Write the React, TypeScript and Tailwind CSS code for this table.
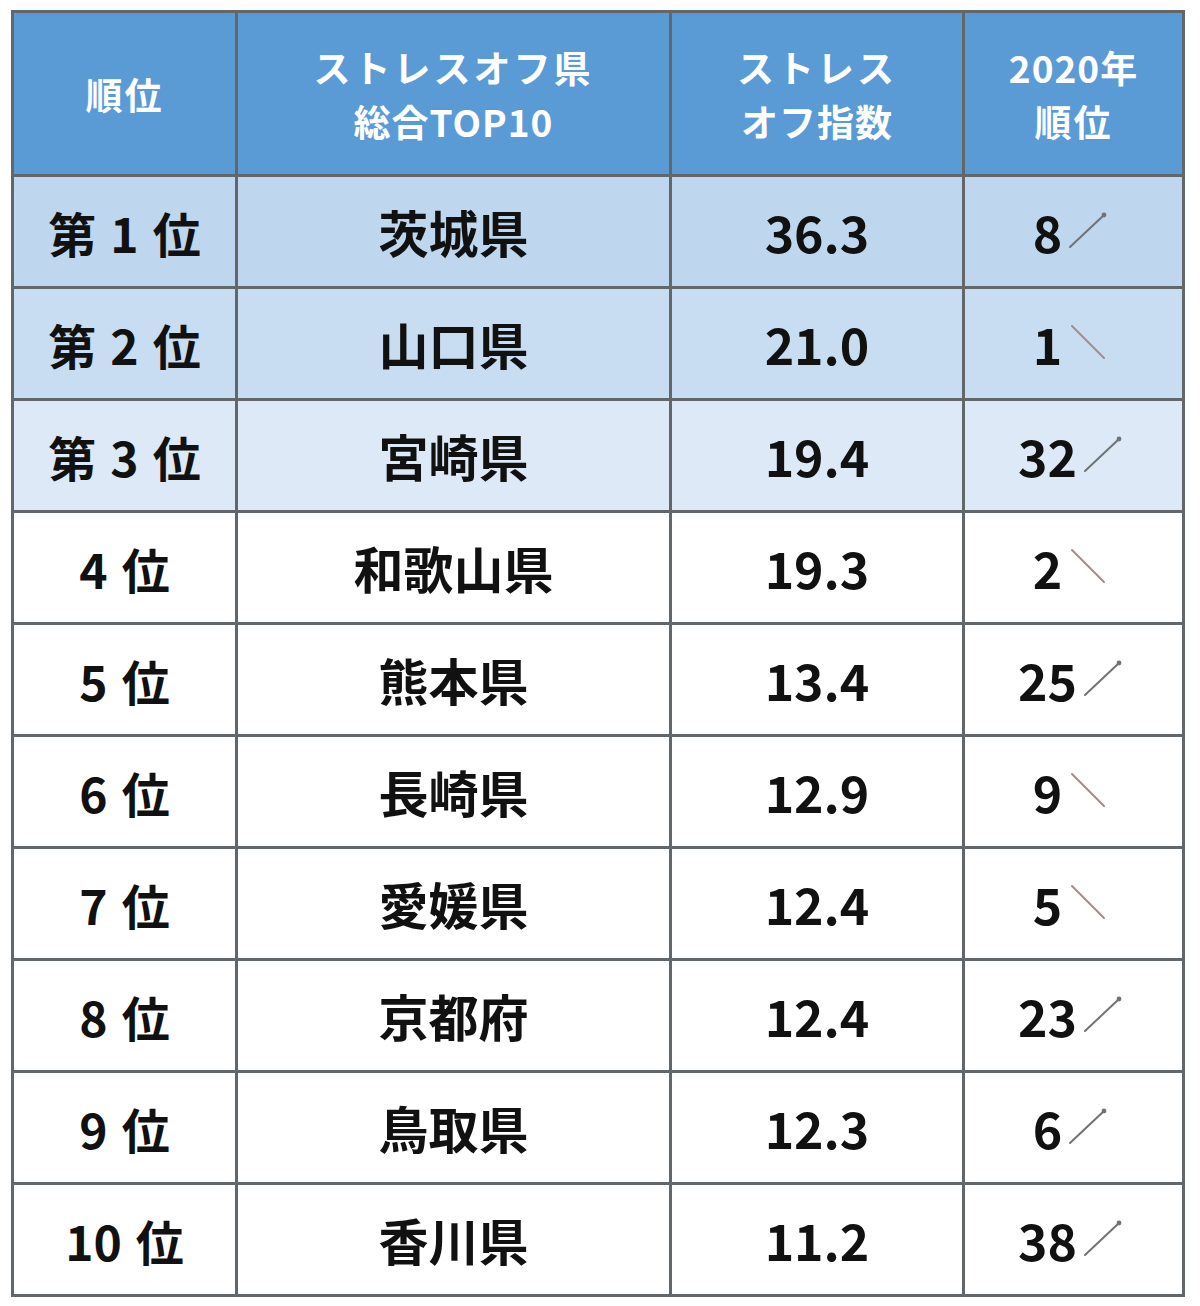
import React from "react";

type Row = { rank: string[]; pref: string; score: string; prev: string; up: boolean; bg: string };

const rows: Row[] = [
  { rank: ["第", "1", "位"], pref: "茨城県", score: "36.3", prev: "8", up: true, bg: "bg-[#bed6ee]" },
  { rank: ["第", "2", "位"], pref: "山口県", score: "21.0", prev: "1", up: false, bg: "bg-[#c8ddf1]" },
  { rank: ["第", "3", "位"], pref: "宮崎県", score: "19.4", prev: "32", up: true, bg: "bg-[#dde9f6]" },
  { rank: ["4", "位"], pref: "和歌山県", score: "19.3", prev: "2", up: false, bg: "bg-white" },
  { rank: ["5", "位"], pref: "熊本県", score: "13.4", prev: "25", up: true, bg: "bg-white" },
  { rank: ["6", "位"], pref: "長崎県", score: "12.9", prev: "9", up: false, bg: "bg-white" },
  { rank: ["7", "位"], pref: "愛媛県", score: "12.4", prev: "5", up: false, bg: "bg-white" },
  { rank: ["8", "位"], pref: "京都府", score: "12.4", prev: "23", up: true, bg: "bg-white" },
  { rank: ["9", "位"], pref: "鳥取県", score: "12.3", prev: "6", up: true, bg: "bg-white" },
  { rank: ["10", "位"], pref: "香川県", score: "11.2", prev: "38", up: true, bg: "bg-white" },
];

function Arrow({ up }: { up: boolean }) {
  if (up) {
    return (
      <svg width="44" height="44" viewBox="0 0 44 44" className="ml-[4px] mt-[-6px]">
        <line x1="4" y1="40" x2="38" y2="8" stroke="#6f7378" strokeWidth="2" strokeLinecap="round" />
        <circle cx="38" cy="8" r="2.4" fill="#6f7378" />
      </svg>
    );
  }
  return (
    <svg width="44" height="44" viewBox="0 0 44 44" className="ml-[4px] mt-[-4px]">
      <line x1="6" y1="6" x2="38" y2="38" stroke="#a88a86" strokeWidth="2" strokeLinecap="round" />
    </svg>
  );
}

const cellBase = "flex items-center justify-center";
const head = "flex items-center justify-center flex-col bg-[#5a9bd5] text-white font-bold text-[37px] leading-[54px]";

export default function App() {
  return (
    <div className="w-[1200px] h-[1306px] bg-white pl-[11px] pt-[10px]" style={{ fontFamily: '"Noto Sans CJK JP", "Noto Sans", sans-serif' }}>
      <div className="w-[1174px] border-[3px] border-[#62676c] bg-[#62676c] grid grid-cols-[221px_431px_290px_217px] grid-rows-[161px_repeat(10,109px)] gap-[3px]">
        <div className={head}>
          <span className="tracking-[2px]">順位</span>
        </div>
        <div className={head}>
          <span className="tracking-[3px]">ストレスオフ県</span>
          <span className="tracking-[1px]">総合TOP10</span>
        </div>
        <div className={head}>
          <span className="tracking-[3px]">ストレス</span>
          <span className="tracking-[1px]">オフ指数</span>
        </div>
        <div className={head}>
          <span className="tracking-[1px]">2020年</span>
          <span className="tracking-[2px]">順位</span>
        </div>
        {rows.map((r, i) => (
          <React.Fragment key={i}>
            <div className={`${cellBase} ${r.bg} text-[#111] font-bold text-[48px] gap-[14px]`}>
              {r.rank.map((p, j) => (
                <span key={j}>{p}</span>
              ))}
            </div>
            <div className={`${cellBase} ${r.bg} text-[#111] font-bold text-[50px]`}>{r.pref}</div>
            <div className={`${cellBase} ${r.bg} text-[#111] font-bold text-[50px]`}>{r.score}</div>
            <div className={`${cellBase} ${r.bg} text-[#111] font-bold text-[50px] pr-[4px]`}>
              <span>{r.prev}</span>
              <Arrow up={r.up} />
            </div>
          </React.Fragment>
        ))}
      </div>
    </div>
  );
}
